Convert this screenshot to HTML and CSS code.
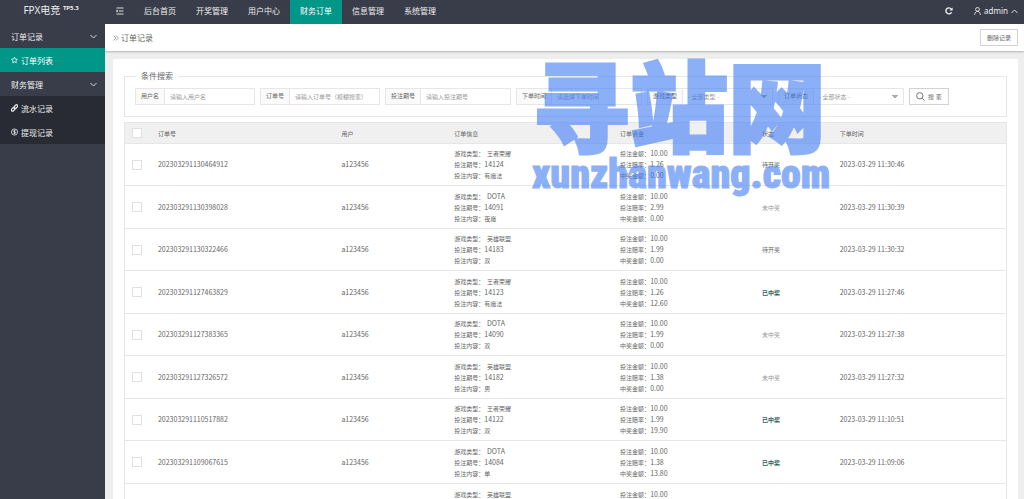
FILE: index.html
```html
<!DOCTYPE html>
<html lang="zh-CN">
<head>
    <meta charset="UTF-8">
    <meta name="viewport" content="width=device-width, initial-scale=1.0">
    <title>订单记录</title>
    <link rel="stylesheet" href="styles.css">
</head>
<body>
    <header class="header">
        <a href="#" class="logo">FPX电竞 <sup>TP5.3</sup></a>
        <button type="button" class="menu-toggle" aria-label="菜单">
            <svg width="8" height="8" viewBox="0 0 8 8"><path d="M0.5 1h7M3 4h4.5M0.5 7h7" /><path class="fill" d="M0.5 2.6l2 1.4-2 1.4z" /></svg>
        </button>
        <nav class="nav">
            <a href="#">后台首页</a>
            <a href="#">开奖管理</a>
            <a href="#">用户中心</a>
            <a href="#" class="active">财务订单</a>
            <a href="#">信息管理</a>
            <a href="#">系统管理</a>
        </nav>
        <div class="tools">
            <button type="button" aria-label="刷新">
                <svg width="8" height="8" viewBox="0 0 8 8"><path class="thick" d="M6.6 5.2A3 3 0 1 1 6.3 2" /><path class="fill" d="M7.6 0.4v3.2H4.4z" /></svg>
            </button>
            <a href="#" class="user">
                <svg width="7" height="8" viewBox="0 0 7 8"><circle cx="3.5" cy="2.4" r="1.9" /><path d="M0.6 7.8C0.8 5.6 2 4.5 3.5 4.3 5 4.5 6.2 5.6 6.4 7.8" /></svg>
                <span>admin</span>
                <svg width="7" height="5" viewBox="0 0 7 5"><path d="M0.5 4l3-3 3 3" /></svg>
            </a>
        </div>
    </header>

    <div class="body">
        <aside class="sidebar">
            <a href="#" class="group">订单记录 <svg width="7" height="5" viewBox="0 0 7 5"><path d="M0.5 1l3 3 3-3" /></svg></a>
            <a href="#" class="active">
                <svg width="7" height="8" viewBox="0 0 8 8"><path d="M4 0.7l1 2.2 2.4 0.3-1.8 1.6 0.5 2.4L4 6 1.9 7.2l0.5-2.4L0.6 3.2 3 2.9z" /></svg>
                订单列表
            </a>
            <a href="#" class="group">财务管理 <svg width="7" height="5" viewBox="0 0 7 5"><path d="M0.5 1l3 3 3-3" /></svg></a>
            <div class="sub">
                <a href="#">
                    <svg width="7" height="8" viewBox="0 0 8 8"><g class="thick"><rect x="3.3" y="1" width="4.6" height="2.8" rx="1.4" transform="rotate(-45 5.6 2.4)" /><rect x="0.1" y="4.2" width="4.6" height="2.8" rx="1.4" transform="rotate(-45 2.4 5.6)" /></g></svg>
                    流水记录
                </a>
                <a href="#">
                    <svg width="7" height="8" viewBox="0 0 8 8"><circle cx="4" cy="4" r="3.5" /><path d="M5.2 2.8C4.6 2 2.8 2.2 2.9 3.1 3 4.1 5.2 3.7 5.2 4.9 5.2 5.9 3.3 6 2.7 5.2M4 1.5v5" /></svg>
                    提现记录
                </a>
            </div>
        </aside>

        <main class="main">
            <div class="crumb">
                <h1><svg width="6" height="6" viewBox="0 0 6 6"><path d="M0.5 0.5L3 3 0.5 5.5M3 0.5L5.5 3 3 5.5" /></svg> 订单记录</h1>
                <button type="button" class="btn">删除记录</button>
            </div>

            <div class="panel">
                <form>
                    <fieldset class="search">
                        <legend>条件搜索</legend>
                        <div class="fields">
                            <div class="field">
                                <label for="username">用户名</label>
                                <input type="text" id="username" placeholder="请输入用户名">
                            </div>
                            <div class="field">
                                <label for="orderNo">订单号</label>
                                <input type="text" id="orderNo" placeholder="请输入订单号（模糊搜索）">
                            </div>
                            <div class="field">
                                <label for="issue">投注期号</label>
                                <input type="text" id="issue" placeholder="请输入投注期号">
                            </div>
                            <div class="field">
                                <label for="orderTime">下单时间</label>
                                <input type="text" id="orderTime" placeholder="请选择下单时间">
                            </div>
                            <div class="field">
                                <label for="gameType">游戏类型</label>
                                <select id="gameType"><option>- 全部类型 -</option></select>
                            </div>
                            <div class="field">
                                <label for="status">订单状态</label>
                                <select id="status"><option>- 全部状态 -</option></select>
                            </div>
                            <button type="submit" class="btn">
                                <svg width="9" height="9" viewBox="0 0 9 9"><circle cx="3.8" cy="3.8" r="3.2" /><path d="M6.2 6.2l2.4 2.4" /></svg>
                                搜 索
                            </button>
                        </div>
                    </fieldset>
                </form>

                <table class="orders">
                    <thead>
                        <tr>
                            <th class="col-check"><input type="checkbox" aria-label="全选"></th>
                            <th class="col-no">订单号</th>
                            <th class="col-user">用户</th>
                            <th class="col-info">订单信息</th>
                            <th class="col-money">订单资金</th>
                            <th class="col-status">状态</th>
                            <th>下单时间</th>
                        </tr>
                    </thead>
                    <tbody>
                        <tr>
                            <td><input type="checkbox" aria-label="选择"></td>
                            <td class="num">202303291130464912</td>
                            <td class="num">a123456</td>
                            <td>游戏类型：&nbsp; 王者荣耀<br>投注期号：<span class="num">14124</span><br>投注内容：有魔法</td>
                            <td>投注金额：<span class="num">10.00</span><br>投注赔率：<span class="num">1.26</span><br>中奖金额：<span class="num">0.00</span></td>
                            <td>待开奖</td>
                            <td class="num">2023-03-29 11:30:46</td>
                        </tr>
                        <tr>
                            <td><input type="checkbox" aria-label="选择"></td>
                            <td class="num">202303291130398028</td>
                            <td class="num">a123456</td>
                            <td>游戏类型：&nbsp; <span class="num">DOTA</span><br>投注期号：<span class="num">14091</span><br>投注内容：夜魔</td>
                            <td>投注金额：<span class="num">10.00</span><br>投注赔率：<span class="num">2.99</span><br>中奖金额：<span class="num">0.00</span></td>
                            <td class="lost">未中奖</td>
                            <td class="num">2023-03-29 11:30:39</td>
                        </tr>
                        <tr>
                            <td><input type="checkbox" aria-label="选择"></td>
                            <td class="num">202303291130322466</td>
                            <td class="num">a123456</td>
                            <td>游戏类型：&nbsp; 英雄联盟<br>投注期号：<span class="num">14183</span><br>投注内容：双</td>
                            <td>投注金额：<span class="num">10.00</span><br>投注赔率：<span class="num">1.99</span><br>中奖金额：<span class="num">0.00</span></td>
                            <td>待开奖</td>
                            <td class="num">2023-03-29 11:30:32</td>
                        </tr>
                        <tr>
                            <td><input type="checkbox" aria-label="选择"></td>
                            <td class="num">202303291127463829</td>
                            <td class="num">a123456</td>
                            <td>游戏类型：&nbsp; 王者荣耀<br>投注期号：<span class="num">14123</span><br>投注内容：有魔法</td>
                            <td>投注金额：<span class="num">10.00</span><br>投注赔率：<span class="num">1.26</span><br>中奖金额：<span class="num">12.60</span></td>
                            <td class="won">已中奖</td>
                            <td class="num">2023-03-29 11:27:46</td>
                        </tr>
                        <tr>
                            <td><input type="checkbox" aria-label="选择"></td>
                            <td class="num">202303291127383365</td>
                            <td class="num">a123456</td>
                            <td>游戏类型：&nbsp; <span class="num">DOTA</span><br>投注期号：<span class="num">14090</span><br>投注内容：双</td>
                            <td>投注金额：<span class="num">10.00</span><br>投注赔率：<span class="num">1.99</span><br>中奖金额：<span class="num">0.00</span></td>
                            <td class="lost">未中奖</td>
                            <td class="num">2023-03-29 11:27:38</td>
                        </tr>
                        <tr>
                            <td><input type="checkbox" aria-label="选择"></td>
                            <td class="num">202303291127326572</td>
                            <td class="num">a123456</td>
                            <td>游戏类型：&nbsp; 英雄联盟<br>投注期号：<span class="num">14182</span><br>投注内容：男</td>
                            <td>投注金额：<span class="num">10.00</span><br>投注赔率：<span class="num">1.38</span><br>中奖金额：<span class="num">0.00</span></td>
                            <td class="lost">未中奖</td>
                            <td class="num">2023-03-29 11:27:32</td>
                        </tr>
                        <tr>
                            <td><input type="checkbox" aria-label="选择"></td>
                            <td class="num">202303291110517882</td>
                            <td class="num">a123456</td>
                            <td>游戏类型：&nbsp; 王者荣耀<br>投注期号：<span class="num">14122</span><br>投注内容：双</td>
                            <td>投注金额：<span class="num">10.00</span><br>投注赔率：<span class="num">1.99</span><br>中奖金额：<span class="num">19.90</span></td>
                            <td class="won">已中奖</td>
                            <td class="num">2023-03-29 11:10:51</td>
                        </tr>
                        <tr>
                            <td><input type="checkbox" aria-label="选择"></td>
                            <td class="num">202303291109067615</td>
                            <td class="num">a123456</td>
                            <td>游戏类型：&nbsp; <span class="num">DOTA</span><br>投注期号：<span class="num">14084</span><br>投注内容：单</td>
                            <td>投注金额：<span class="num">10.00</span><br>投注赔率：<span class="num">1.38</span><br>中奖金额：<span class="num">13.80</span></td>
                            <td class="won">已中奖</td>
                            <td class="num">2023-03-29 11:09:06</td>
                        </tr>
                        <tr>
                            <td></td>
                            <td></td>
                            <td></td>
                            <td class="top">游戏类型：&nbsp; 英雄联盟</td>
                            <td class="top">投注金额：<span class="num">10.00</span></td>
                            <td></td>
                            <td></td>
                        </tr>
                    </tbody>
                </table>
            </div>
        </main>
    </div>

    <div class="watermark">
        <div class="watermark-name">寻站网</div>
        <div class="watermark-site">xunzhanwang.com</div>
    </div>
</body>
</html>
```
FILE: styles.css
```css
* {
    margin: 0;
    padding: 0;
    box-sizing: border-box;
}

body {
    height: 100vh;
    display: flex;
    flex-direction: column;
    overflow: hidden;
    font-family: "Noto Sans", "Noto Sans CJK SC", sans-serif;
    font-size: 8px;
    color: #666;
    background: #eee;
}

a {
    color: inherit;
    text-decoration: none;
}

button,
input,
select {
    font-family: inherit;
    font-size: 6px;
    color: inherit;
}

svg {
    flex: none;
    fill: none;
    stroke: currentColor;
    stroke-width: 0.9;
}

svg .thick {
    stroke-width: 1.4;
}

svg .fill {
    fill: currentColor;
    stroke: none;
}

/* header */
.header {
    display: flex;
    flex: none;
    height: 24px;
    line-height: 22px;
    background: #393d49;
    color: #eee;
}

.logo {
    width: 105px;
    padding-right: 3px;
    text-align: center;
    font-size: 10px;
    line-height: 20px;
}

.logo sup {
    font-size: 6px;
    font-weight: bold;
    line-height: 1;
}

.menu-toggle,
.tools button {
    display: flex;
    align-items: center;
    justify-content: center;
    width: 29px;
    height: 22px;
    border: none;
    background: none;
    color: #eee;
}

.nav {
    display: flex;
}

.nav a {
    padding: 0 10px;
}

.nav .active,
.sidebar .active {
    background: #009688;
    color: #fff;
}

.nav .active {
    height: 24px;
}

.tools {
    display: flex;
    margin-left: auto;
    padding-right: 6px;
    gap: 11px;
}

.user {
    display: flex;
    align-items: center;
    gap: 3px;
    height: 22px;
}

.body {
    display: flex;
    flex: 1;
    min-height: 0;
}

/* sidebar */
.sidebar {
    flex: none;
    width: 105px;
    background: #393d49;
    color: #eee;
}

.sidebar a {
    display: flex;
    align-items: center;
    gap: 3px;
    height: 24px;
    padding: 0 8px 0 11px;
}

.sidebar .group {
    justify-content: space-between;
}

.sidebar .sub {
    background: #282b33;
}

/* content */
.main {
    flex: 1;
    min-width: 0;
    overflow: hidden;
}

.crumb {
    display: flex;
    align-items: center;
    justify-content: space-between;
    height: 27px;
    padding: 0 6px 0 8px;
    background: #fff;
    box-shadow: 0 1px 2px rgba(0, 0, 0, 0.25);
}

.crumb h1 {
    font-size: 8px;
    font-weight: normal;
}

.crumb svg {
    color: #999;
}

.btn {
    display: flex;
    align-items: center;
    gap: 3px;
    height: 17px;
    padding: 0 6px;
    border: 1px solid #d2d2d2;
    background: #fff;
    cursor: pointer;
}

.panel {
    margin: 8px 6px 0 8px;
    padding: 11px 11px 0;
    background: #fff;
}

.search {
    min-width: 0;
    border: 1px solid #e6e6e6;
    padding: 6px 10px 11px;
}

.search legend {
    margin-left: 1px;
    padding: 0 5px;
    line-height: 12px;
}

.fields {
    display: flex;
    gap: 5px;
}

.field {
    display: flex;
    height: 17px;
    border: 1px solid #e6e6e6;
}

.field label {
    padding: 0 5px;
    border-right: 1px solid #e6e6e6;
    background: #fafafa;
    font-size: 6px;
    line-height: 15px;
}

.field input,
.field select {
    width: 89px;
    padding: 0 5px;
    border: none;
    border-radius: 0;
    outline: none;
    background: #fff;
}

.field select {
    appearance: none;
    color: #999;
    background: linear-gradient(to bottom right, #aaa 60%, transparent 60%) right 5px top 6px / 3px 3px no-repeat,
        linear-gradient(to bottom left, #aaa 60%, transparent 60%) right 8px top 6px / 3px 3px no-repeat;
}

.field input::placeholder {
    color: #999;
}

/* order table */
.orders {
    width: 100%;
    margin-top: 5px;
    border: 1px solid #e6e6e6;
    border-collapse: collapse;
    table-layout: fixed;
    font-family: "Noto Sans CJK SC", sans-serif;
    font-size: 6px;
    line-height: 11px;
}

.orders th {
    height: 21px;
    padding: 0 7px;
    background: #f0f0f0;
    text-align: left;
    font-weight: normal;
}

.orders td {
    height: 42px;
    padding: 0 7px;
    border-top: 1px solid #e6e6e6;
    white-space: nowrap;
}

.orders tr:nth-child(even) td {
    height: 43px;
}

.orders .top {
    padding-top: 5px;
    vertical-align: top;
}

.orders input {
    display: block;
    appearance: none;
    width: 10px;
    height: 10px;
    border: 1px solid #e0e0e0;
    background: #fff;
}

.orders .num {
    font-size: 7px;
}

.orders span.num {
    line-height: 9px;
}

.col-check {
    width: 3%;
}

.col-no {
    width: 20.8%;
}

.col-user {
    width: 12.8%;
}

.col-info {
    width: 18.8%;
}

.col-money {
    width: 16.1%;
}

.col-status {
    width: 8.8%;
}

.orders .lost {
    color: #999;
}

.orders .won {
    color: #2f5f57;
    font-weight: bold;
}

/* overlay mark */
.watermark {
    position: absolute;
    top: 50px;
    left: 532px;
    color: #407cf5;
    opacity: 0.6;
    pointer-events: none;
    white-space: nowrap;
}

.watermark-name {
    font-family: "Noto Sans CJK SC", sans-serif;
    font-size: 98px;
    font-weight: 900;
    line-height: 102px;
    -webkit-text-stroke: 3px #407cf5;
}

.watermark-site {
    font-family: "Liberation Sans Narrow", "Roboto Condensed", sans-serif;
    font-size: 40px;
    font-weight: 900;
    line-height: 46px;
    -webkit-text-stroke: 1px #407cf5;
}
```
